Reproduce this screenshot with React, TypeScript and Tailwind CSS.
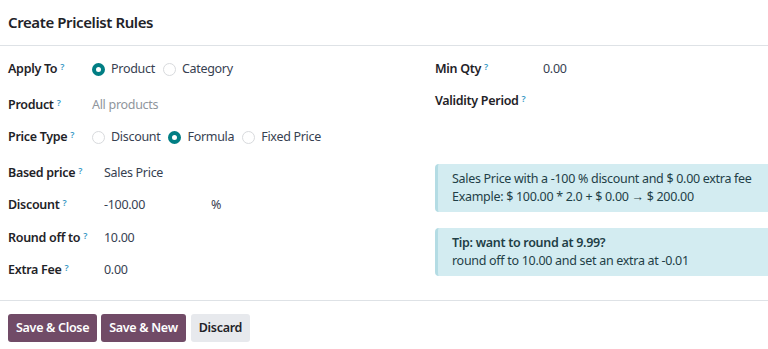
import React from 'react';

const font = { fontFamily: '"Noto Sans", "Open Sans", sans-serif' };

const Help: React.FC = () => (
  <sup className="ml-[3px] text-[9px] font-semibold text-[#3597c4] relative -top-[3px]">?</sup>
);

const Label: React.FC<{ text: string; w: string }> = ({ text, w }) => (
  <div className={`${w} shrink-0 font-semibold text-[#1f2328] whitespace-nowrap`}>
    {text}
    <Help />
  </div>
);

const Radio: React.FC<{ label: string; checked?: boolean }> = ({ label, checked }) => (
  <label className="flex items-center gap-[6px] mr-[8px]">
    {checked ? (
      <span className="w-[13px] h-[13px] rounded-full border-[4px] border-[#017e84] bg-white" />
    ) : (
      <span className="w-[13px] h-[13px] rounded-full border border-[#d8dadd] bg-white" />
    )}
    <span className="text-[#374151]">{label}</span>
  </label>
);

export default function App() {
  return (
    <div className="w-[768px] h-[349px] bg-white text-[12.5px] tracking-[-0.3px] overflow-hidden" style={font}>
      <div className="h-[46px] flex items-center px-2 border-b border-[#dee2e6]">
        <h1 className="text-[15px] tracking-[-0.4px] font-semibold text-[#1f2328]">Create Pricelist Rules</h1>
      </div>

      <div className="flex px-2 pt-[7px] pb-[14px]">
        <div className="w-[427px] shrink-0">
          <div className="h-8 flex items-center">
            <Label text="Apply To" w="w-[84px]" />
            <Radio label="Product" checked />
            <Radio label="Category" />
          </div>
          <div className="h-8 flex items-center mt-[4px]">
            <Label text="Product" w="w-[84px]" />
            <span className="text-[#8f959c]">All products</span>
          </div>
          <div className="h-8 flex items-center">
            <Label text="Price Type" w="w-[84px]" />
            <Radio label="Discount" />
            <Radio label="Formula" checked />
            <Radio label="Fixed Price" />
          </div>

          <div className="h-8 flex items-center mt-[4px]">
            <Label text="Based price" w="w-[96px]" />
            <span className="text-[#374151]">Sales Price</span>
          </div>
          <div className="h-8 flex items-center">
            <Label text="Discount" w="w-[96px]" />
            <span className="w-[107px] text-[#374151]">-100.00</span>
            <span className="text-[#374151]">%</span>
          </div>
          <div className="h-8 flex items-center mt-[1px]">
            <Label text="Round off to" w="w-[96px]" />
            <span className="text-[#374151]">10.00</span>
          </div>
          <div className="h-8 flex items-center">
            <Label text="Extra Fee" w="w-[96px]" />
            <span className="text-[#374151]">0.00</span>
          </div>
        </div>

        <div className="flex-1 min-w-0">
          <div className="h-8 flex items-center">
            <Label text="Min Qty" w="w-[108px]" />
            <span className="text-[#374151]">0.00</span>
          </div>
          <div className="h-8 flex items-center">
            <Label text="Validity Period" w="w-[108px]" />
          </div>

          <div className="mt-[47px] mr-[-12px] bg-[#d3ecf1] border-l-[3px] border-[#b4dce4] rounded-[4px] pl-[14px] py-[6px] leading-[18px] text-[#1f3f47]">
            <div>Sales Price with a -100 % discount and $ 0.00 extra fee</div>
            <div>Example: $ 100.00 * 2.0 + $ 0.00 → $ 200.00</div>
          </div>
          <div className="mt-[16px] mr-[-12px] bg-[#d3ecf1] border-l-[3px] border-[#b4dce4] rounded-[4px] pl-[14px] py-[6px] leading-[18px] text-[#1f3f47]">
            <div className="font-semibold">Tip: want to round at 9.99?</div>
            <div>round off to 10.00 and set an extra at -0.01</div>
          </div>
        </div>
      </div>

      <div className="border-t border-[#dee2e6] px-2 pt-[13px] flex gap-[4px]">
        <button className="h-[28px] px-[8px] rounded-[3px] bg-[#714b67] text-white font-semibold">Save &amp; Close</button>
        <button className="h-[28px] px-[8px] rounded-[3px] bg-[#714b67] text-white font-semibold">Save &amp; New</button>
        <button className="h-[28px] px-[8px] rounded-[3px] bg-[#e7e9ed] text-[#1f2328] font-semibold ml-[1px]">Discard</button>
      </div>
    </div>
  );
}
